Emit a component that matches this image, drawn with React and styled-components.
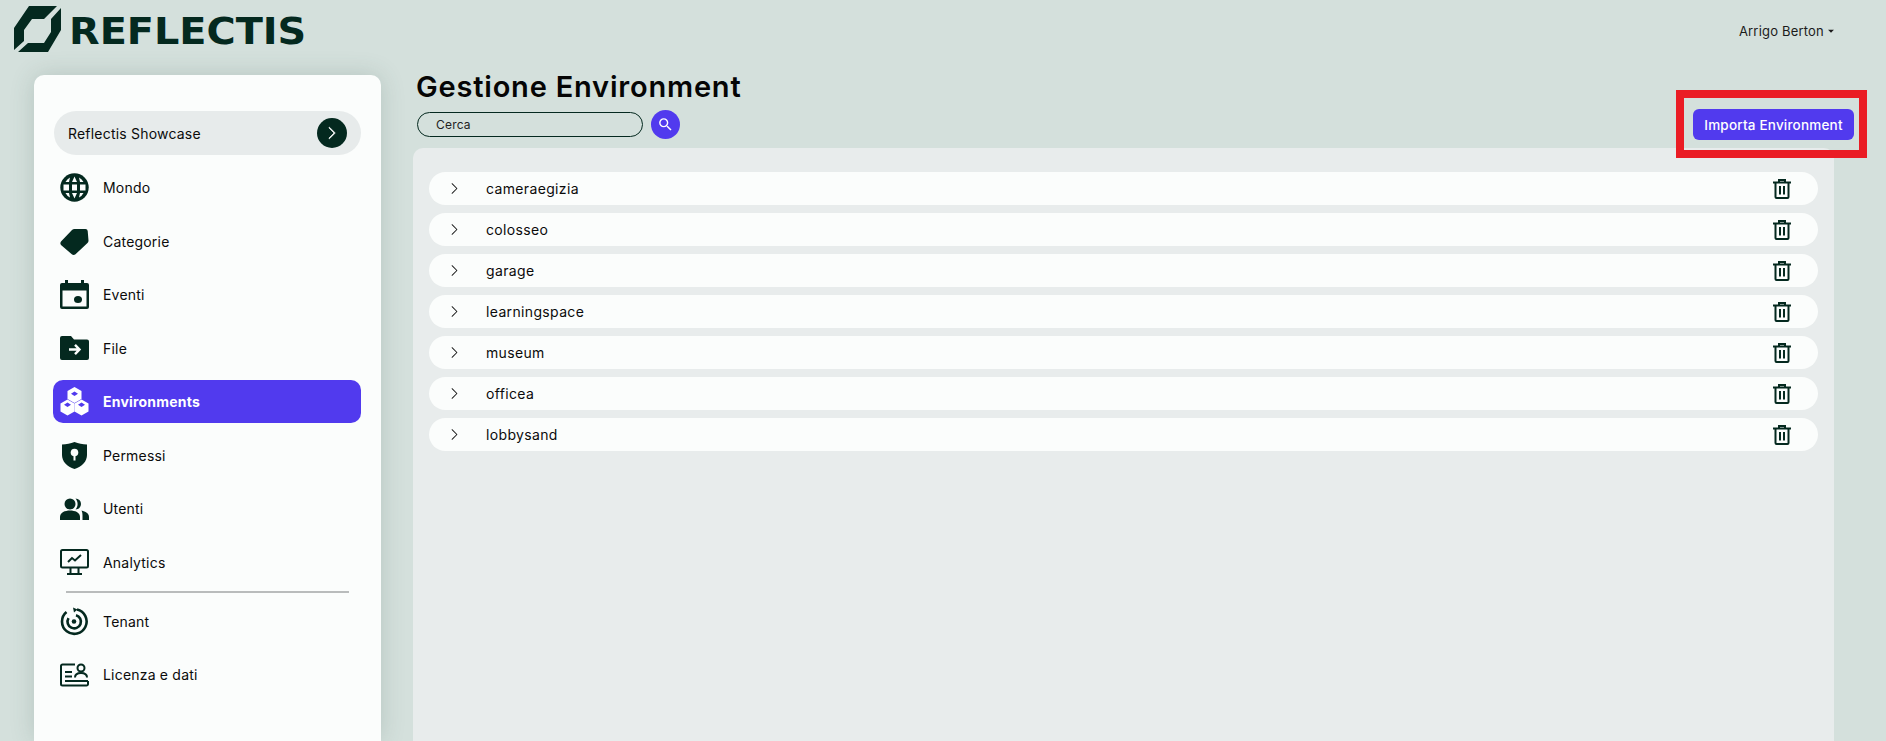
import React from 'react';
import styled, { createGlobalStyle } from 'styled-components';
import { MdSearch, MdArrowDropDown } from 'react-icons/md';
import { BsChevronRight } from 'react-icons/bs';

const FONT = '"Inter", "Noto Sans", sans-serif';
const DARK = '#04291f';
const VIOLET = '#513aee';

const Global = createGlobalStyle`
  html, body { margin: 0; padding: 0; height: 741px; overflow: hidden; background: #d4e0dc; }
  * { box-sizing: border-box; }
  body { font-family: ${FONT}; color: #0b0b0b; }
`;

const Page = styled.div`
  position: relative;
  width: 1886px;
  height: 741px;
  overflow: hidden;
  display: flex;
  flex-direction: column;
`;
const TopBar = styled.header`
  height: 75px;
  flex: none;
  display: flex;
  justify-content: space-between;
  align-items: flex-start;
  padding: 6px 48px 0 14px;
`;
const Brand = styled.div`
  display: flex;
  align-items: center;
  gap: 8px;
  height: 47px;
`;
const Wordmark = styled.span`
  display: inline-block;
  font-family: "DejaVu Sans", sans-serif;
  font-weight: 700;
  font-size: 37px;
  color: ${DARK};
  line-height: 1;
  margin-top: 4px;
  transform: scaleX(1.075);
  transform-origin: left center;
`;
const UserMenu = styled.div`
  display: flex;
  align-items: center;
  font-size: 13px;
  letter-spacing: 0.2px;
  margin-top: 16px;
  height: 18px;
  color: #1b1b1b;
`;
const Body = styled.div`
  flex: 1;
  display: flex;
  padding-left: 34px;
  min-height: 0;
`;
const Sidebar = styled.aside`
  width: 347px;
  flex: none;
  background: #fbfdfc;
  border-radius: 10px 10px 0 0;
  box-shadow: 0 0 24px rgba(60, 90, 80, 0.2);
  padding: 36px 20px 0 19px;
  display: flex;
  flex-direction: column;
`;
const TenantPill = styled.div`
  height: 44px;
  background: #e7ebeb;
  border-radius: 22px;
  margin: 0 0 11px 1px;
  padding: 0 14px;
  display: flex;
  align-items: center;
  justify-content: space-between;
  font-size: 14px;
  letter-spacing: 0.2px;
`;
const RoundChevron = styled.span`
  width: 30px;
  height: 30px;
  border-radius: 50%;
  background: ${DARK};
  color: #fff;
  display: flex;
  align-items: center;
  justify-content: center;
`;
const NavItem = styled.div`
  height: 43px;
  flex: none;
  margin-bottom: 10.5px;
  border-radius: 10px;
  display: flex;
  align-items: center;
  gap: 14px;
  padding-left: 7px;
  font-size: 14px;
  letter-spacing: 0.2px;
  font-weight: ${p => (p.$active ? 700 : 400)};
  background: ${p => (p.$active ? VIOLET : 'transparent')};
  color: ${p => (p.$active ? '#fff' : '#0b0b0b')};
  svg { color: ${p => (p.$active ? '#fff' : DARK)}; flex: none; display: block; }
`;
const Divider = styled.hr`
  border: 0;
  height: 2px;
  flex: none;
  background: #b9bcbc;
  margin: -3.5px 12px 7px 13px;
`;
const Main = styled.main`
  flex: 1;
  margin-left: 32px;
  margin-right: 52px;
  display: flex;
  flex-direction: column;
  min-width: 0;
`;
const MainHead = styled.div`
  height: 73px;
  flex: none;
  display: flex;
  justify-content: space-between;
  padding-left: 3px;
`;
const Title = styled.h1`
  margin: -6px 0 0;
  font-size: 29px;
  letter-spacing: 0.8px;
  font-weight: 600;
  line-height: 36px;
  color: #050505;
`;
const SearchRow = styled.div`
  display: flex;
  align-items: center;
  gap: 8px;
  margin: 5px 0 0 1px;
`;
const SearchBox = styled.div`
  width: 226px;
  height: 25px;
  border: 1px solid ${DARK};
  border-radius: 13px;
  padding-left: 18px;
  font-size: 12px;
  letter-spacing: 0.2px;
  display: flex;
  align-items: center;
  color: #222;
`;
const SearchBtn = styled.span`
  width: 29px;
  height: 29px;
  border-radius: 50%;
  background: ${VIOLET};
  color: #fff;
  display: flex;
  align-items: center;
  justify-content: center;
`;
const ImportBtn = styled.button`
  margin: 34px -20px 0 0;
  width: 161px;
  height: 31px;
  border: 0;
  padding: 0;
  border-radius: 6px;
  background: ${VIOLET};
  color: #fff;
  font-family: ${FONT};
  font-size: 13.5px;
  letter-spacing: 0.2px;
  font-weight: 500;
`;
const Panel = styled.section`
  flex: 1;
  background: #e8ecec;
  border-radius: 10px 10px 0 0;
  padding: 24px 16px 0;
  display: flex;
  flex-direction: column;
  gap: 8px;
`;
const Row = styled.div`
  height: 33px;
  background: #fbfdfc;
  border-radius: 17px;
  display: flex;
  align-items: center;
  padding: 0 27px 0 19px;
  font-size: 14px;
  letter-spacing: 0.35px;
  color: #0b0b0b;
`;
const RowName = styled.span`
  flex: 1;
  margin-left: 25px;
  margin-top: -1px;
`;
const Annotation = styled.div`
  position: absolute;
  left: 1676px;
  top: 90px;
  width: 191px;
  height: 68px;
  border: 8px solid #ea1c24;
  pointer-events: none;
`;

const Logo = () => (
  <svg width="47" height="47" viewBox="0 0 47 47" fill={DARK}>
    <path d="M0 22L15 0H43L30 13H18L10 24V35L0 44Z" />
    <path d="M47 2V24L34 46H4L14 37H30L37 26V13Z" />
  </svg>
);
const Globe = () => (
  <svg width="29" height="29" viewBox="0 0 29 29">
    <circle cx="14.500" cy="14.500" r="14.200" fill={DARK} />
    <path
      fill="#fbfdfc"
      d="M12 11.500h5v6h-5zM3.500 11.500h5.500v6H3.500zM20 11.500h5.500v6H20zM14.500 3.500L17 9h-5zM14.500 25.500L12 20h5zM10 4.500L9 9H5.500Q7 6 10 4.500zM19 4.500L20 9h3.500Q22 6 19 4.500zM10 24.500L9 20H5.500Q7 23 10 24.500zM19 24.500L20 20h3.500Q22 23 19 24.500z"
    />
  </svg>
);
const Tag = () => (
  <svg width="29" height="29" viewBox="0 0 29 29" fill={DARK}>
    <path d="M1 14.500L12 3Q13 2 14.500 2H25.500Q27.500 2 27.700 4L28.500 13.500Q28.600 15 27.500 16L15.500 27.300Q13.500 28.800 11.800 27.300L1 18Q-.3 16.300 1 14.500Z" />
  </svg>
);
const Calendar = () => (
  <svg width="29" height="29" viewBox="0 0 29 29" fill={DARK}>
    <rect x="5" y="0" width="3" height="5" />
    <rect x="21" y="0" width="3" height="5" />
    <path fillRule="evenodd" d="M2 3H27A2 2 0 0 1 29 5V27A2 2 0 0 1 27 29H2A2 2 0 0 1 0 27V5A2 2 0 0 1 2 3ZM2.500 10.500V26.500H26.500V10.500Z" />
    <ellipse cx="18" cy="19.500" rx="4" ry="3.500" />
  </svg>
);
const Folder = () => (
  <svg width="29" height="24" viewBox="0 0 29 24">
    <path d="M2 0H11L14 3.500H27A2 2 0 0 1 29 5.500V22A2 2 0 0 1 27 24H2A2 2 0 0 1 0 22V2A2 2 0 0 1 2 0Z" fill={DARK} />
    <path d="M9 13.500H19M15 8.800L19.500 13.500L15 18.200" fill="none" stroke="#fbfdfc" strokeWidth="2.400" />
  </svg>
);
const Hive = () => (
  <svg width="29" height="29" viewBox="0 0 29 29" fill="currentColor">
    <path d="M14.500 0l7 4v8l-7 4-7-4V4z" strokeLinejoin="round" />
    <path d="M7.500 12.500l7 4v8l-7 4-7-4v-8z" />
    <path d="M21.500 12.500l7 4v8l-7 4-7-4v-8z" />
    <path d="M14.500 4.500l3.500 2.200-3.500 2.200-3.500-2.200zM7.500 15.500l3.500 2.200-3.500 2.200-3.500-2.200zM21.500 15.500l3.500 2.200-3.500 2.200-3.500-2.200z" fill={VIOLET} />
  </svg>
);
const Shield = () => (
  <svg width="29" height="29" viewBox="0 0 29 29">
    <path d="M14.500 1c4 1.700 8 2.300 12.500 2.500v10.500c0 6.500-5 11.500-12.500 14C7 25.500 2 20.500 2 14V3.500C6.500 3.300 10.500 2.700 14.500 1z" fill={DARK} />
    <circle cx="14.500" cy="11.500" r="3.800" fill="#fbfdfc" />
    <rect x="13.500" y="12" width="2" height="7.500" fill="#fbfdfc" />
  </svg>
);
const People = () => (
  <svg width="29" height="22" viewBox="0 0 29 22" fill={DARK}>
    <circle cx="10" cy="6" r="5.500" />
    <path d="M0 22V19C0 14.500 5 12.500 10 12.500S20 14.500 20 19V22Z" />
    <path d="M15.500 .5A5.500 5.500 0 0 1 15.500 11.500C17 9.800 17.600 8 17.600 6S17 2.200 15.500 .5Z" />
    <path d="M21.500 12.500C25.500 13.500 29 15 29 19V22H22.500V19C22.500 16.500 22.500 14.500 21.500 12.500Z" />
  </svg>
);
const Monitor = () => (
  <svg width="29" height="26" viewBox="0 0 29 26" fill="none" stroke={DARK} strokeWidth="2">
    <rect x="1" y="1" width="27" height="17.500" rx="1.500" />
    <path d="M8 13l4-4 3 2.500 6-5.500" />
    <path d="M10.500 19v6M18.500 19v6M7 25h15" />
  </svg>
);
const TenantIcon = () => (
  <svg width="29" height="29" viewBox="0 0 29 29" fill="none" stroke={DARK} strokeWidth="2.600">
    <path d="M17 2.500A12.300 12.300 0 1 1 6.500 5" />
    <path d="M16 8.200a6.700 6.700 0 1 1-7.500 3" />
    <circle cx="14" cy="14.500" r="2.300" fill={DARK} stroke="none" />
    <path d="M13 .5l4.500 2-3.500 3" fill={DARK} stroke="none" />
  </svg>
);
const License = () => (
  <svg width="29" height="24" viewBox="0 0 29 24" fill="none" stroke={DARK} strokeWidth="2">
    <path d="M15 1.500H2.500A1.500 1.500 0 0 0 1 3v18A1.500 1.500 0 0 0 2.500 22.500h24a1.500 1.500 0 0 0 1.500-1.500V18" />
    <path d="M5 9h7M5 13.500h7M5 18h23" />
    <circle cx="21" cy="5" r="3.500" />
    <path d="M15 14.500c0-3 2.500-4.500 6-4.500s6 1.500 6 4.500" />
  </svg>
);
const Trash = () => (
  <svg width="18" height="20" viewBox="0 0 18 20" fill="none" stroke={DARK} strokeWidth="2">
    <path d="M0 3.500H18M6 3V1H12V3" />
    <path d="M2.500 3.500V18A1 1 0 0 0 3.500 19H14.500A1 1 0 0 0 15.500 18V3.500" />
    <path d="M7 7V15.500M11 7V15.500" />
  </svg>
);

const items = [
  ['Mondo', <Globe />],
  ['Categorie', <Tag />],
  ['Eventi', <Calendar />],
  ['File', <Folder />],
  ['Environments', <Hive />, true],
  ['Permessi', <Shield />],
  ['Utenti', <People />],
  ['Analytics', <Monitor />],
];
const rows = ['cameraegizia', 'colosseo', 'garage', 'learningspace', 'museum', 'officea', 'lobbysand'];

export default function App() {
  return (
    <Page>
      <Global />
      <TopBar>
        <Brand>
          <Logo />
          <Wordmark>REFLECTIS</Wordmark>
        </Brand>
        <UserMenu>Arrigo Berton<MdArrowDropDown size={14} /></UserMenu>
      </TopBar>
      <Body>
        <Sidebar>
          <TenantPill>
            Reflectis Showcase
            <RoundChevron><BsChevronRight size={14} stroke="currentColor" strokeWidth="0.8" /></RoundChevron>
          </TenantPill>
          {items.map(([label, icon, active]) => (
            <NavItem key={label} $active={active}>{icon}{label}</NavItem>
          ))}
          <Divider />
          <NavItem><TenantIcon />Tenant</NavItem>
          <NavItem><License />Licenza e dati</NavItem>
        </Sidebar>
        <Main>
          <MainHead>
            <div>
              <Title>Gestione Environment</Title>
              <SearchRow>
                <SearchBox>Cerca</SearchBox>
                <SearchBtn><MdSearch size={17} /></SearchBtn>
              </SearchRow>
            </div>
            <ImportBtn>Importa Environment</ImportBtn>
          </MainHead>
          <Panel>
            {rows.map(r => (
              <Row key={r}>
                <BsChevronRight size={13} />
                <RowName>{r}</RowName>
                <Trash />
              </Row>
            ))}
          </Panel>
        </Main>
      </Body>
      <Annotation />
    </Page>
  );
}
